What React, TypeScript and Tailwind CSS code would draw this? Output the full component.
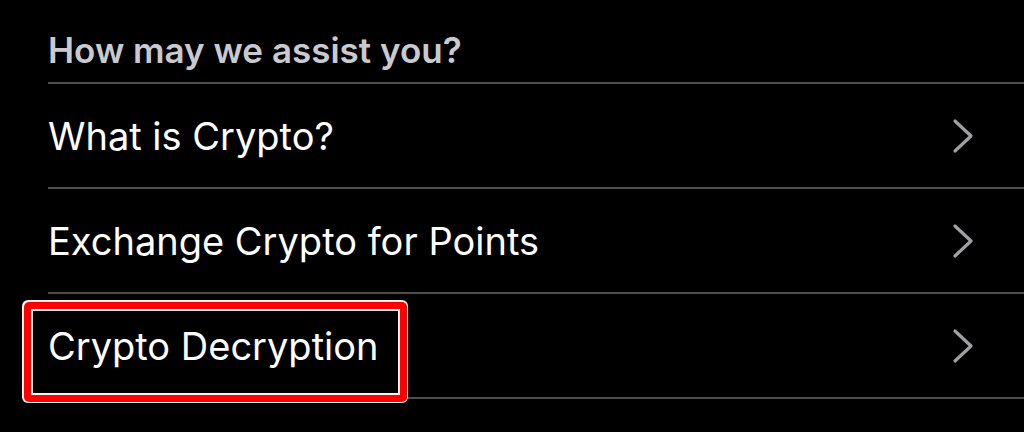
import React from "react";

function Chevron() {
  return (
    <svg width="22" height="36" viewBox="0 0 22 36" fill="none" className="shrink-0">
      <polyline
        points="3,3 19,18 3,33"
        stroke="#a0a0a4"
        strokeWidth="3.2"
        strokeLinecap="round"
        strokeLinejoin="round"
      />
    </svg>
  );
}

function Row({ label, highlight }: { label: string; highlight?: boolean }) {
  return (
    <div className="relative flex h-[105px] items-center justify-between border-b-2 border-[#4e4e50] pr-[50px]">
      {highlight && (
        <div className="absolute left-[-26px] top-[6px] z-10 h-[103px] w-[386px] rounded-[6px] bg-[#f4f4f4] p-[1.5px]">
          <div className="h-full w-full rounded-[5px] bg-[#ff0000] p-[7px]">
            <div className="h-full w-full border-2 border-[#f4f4f4] bg-black" />
          </div>
        </div>
      )}
      <span className="relative z-20 text-[38px] leading-[42px] text-white">{label}</span>
      <Chevron />
    </div>
  );
}

export default function App() {
  return (
    <div
      className="h-[432px] w-[1024px] overflow-hidden bg-black pl-[48px]"
      style={{ fontFamily: "Inter, 'Noto Sans', sans-serif" }}
    >
      <div className="h-[84px] border-b-2 border-[#4e4e50] pt-[33px]">
        <div className="text-[35px] font-semibold leading-[35px] text-[#c9c9ce]">
          How may we assist you?
        </div>
      </div>
      <Row label="What is Crypto?" />
      <Row label="Exchange Crypto for Points" />
      <Row label="Crypto Decryption" highlight />
    </div>
  );
}
